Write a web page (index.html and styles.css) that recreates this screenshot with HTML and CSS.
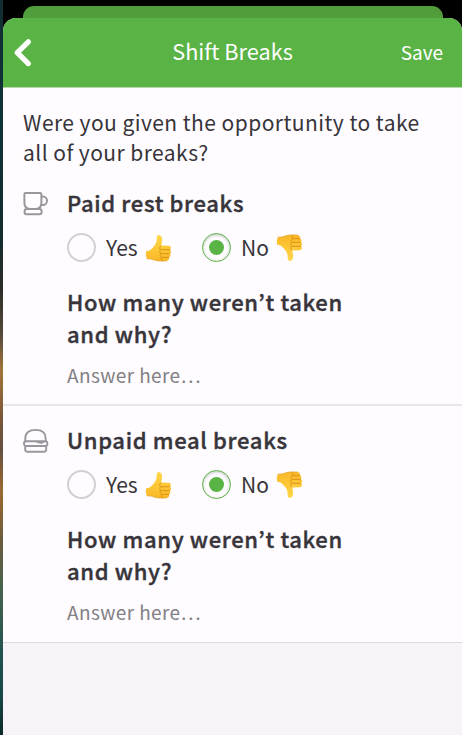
FILE: index.html
```html
<!DOCTYPE html>
<html lang="en">
<head>
    <meta charset="UTF-8">
    <meta name="viewport" content="width=device-width, initial-scale=1.0">
    <title>Shift Breaks</title>
    <link rel="stylesheet" href="styles.css">
</head>
<body>
    <!-- Shared thumb icon -->
    <svg class="defs" width="0" height="0">
        <defs>
            <linearGradient id="skin" x1="0" y1="0" x2="0" y2="1">
                <stop offset="0" stop-color="#ffd84a"/>
                <stop offset="1" stop-color="#f9b826"/>
            </linearGradient>
            <symbol id="thumb" viewBox="0 0 28 28">
                <path d="M1.2 17.3 C3.5 17.2 5.5 16.2 7.2 14.2 C9.3 11.8 11 9.9 11.4 7.6 C11.7 5.5 11.5 3.8 12.1 2.2 C12.7 .8 14.7 .7 15.9 2 C17.8 4.1 17.2 8 16.1 11.6 L23.8 11.7 C26.2 11.8 26.6 15 25 15.7 C26.6 16.6 26.4 19.1 24.8 19.7 C26 20.7 25.6 22.9 24 23.4 C24.6 24.7 23.8 26.6 22 26.8 C17.5 27.2 12.5 27.3 9.3 26 C6.9 25 4.4 24.8 1.8 24.8 C.8 22.4 .6 19.7 1.2 17.3 Z" fill="url(#skin)"/>
                <path d="M16.1 11.8 C14.4 12.5 14.1 14.6 15.6 15.6 C14.3 16.6 14.4 18.7 15.9 19.5 C14.8 20.5 15 22.5 16.6 23.2 C15.8 24.5 16.2 25.9 17.4 26.7 M15.8 15.7 L25 15.7 M16 19.6 L24.8 19.7 M16.6 23.3 L24 23.4" fill="none" stroke="#d98c16" stroke-width=".9"/>
                <path d="M1.8 24.8 C4.4 24.8 6.9 25 9.3 26 C12.5 27.3 17.5 27.2 22 26.8" fill="none" stroke="#e39a1c" stroke-width=".7"/>
            </symbol>
        </defs>
    </svg>

    <div class="back-card"></div>
    <div class="card">
        <header class="header">
            <svg class="back" viewBox="0 0 18 28" width="18" height="28"><path d="M14.3 2.8 L3.3 13.7 L14.3 24.6" fill="none" stroke="#fff" stroke-width="5.2" stroke-linecap="round" stroke-linejoin="round"/></svg>
            <h1 class="title">Shift Breaks</h1>
            <span class="save">Save</span>
        </header>

        <main class="content">
            <p class="question">Were you given the opportunity to take<br>all of your breaks?</p>

            <section class="section first">
                <svg class="icon" viewBox="0 0 26 26" width="26" height="26" fill="none" stroke="#99969d" stroke-width="2" stroke-linejoin="round">
                    <path d="M2.6 2 H17 Q18.4 2 18.4 3.4 V11.5 Q18.4 17.9 12.8 17.9 H7 Q1.4 17.9 1.4 11.5 V3.2 Q1.4 2 2.6 2 Z"/>
                    <path d="M18.6 5.5 H19.8 A4.2 4.2 0 0 1 19.8 13.9 H18.1"/>
                    <rect x="1.6" y="18" width="17" height="5.2" rx="2"/>
                </svg>
                <div class="details">
                    <h2 class="break-name">Paid rest breaks</h2>
                    <div class="options">
                        <span class="radio"></span>
                        <span class="option yes">Yes</span>
                        <svg class="thumb" width="28" height="28"><use href="#thumb"/></svg>
                        <span class="radio checked"></span>
                        <span class="option no">No</span>
                        <svg class="thumb down" width="28" height="28"><use href="#thumb"/></svg>
                    </div>
                    <h3 class="follow-up">How many weren’t taken<br>and why?</h3>
                    <div class="answer">Answer here…</div>
                </div>
            </section>

            <section class="section">
                <svg class="icon" viewBox="0 0 26 26" width="26" height="26" fill="none" stroke="#99969d" stroke-width="1.9" stroke-linejoin="round">
                    <path d="M2.3 13.2 V10.5 C2.3 4.8 6 1.9 12.7 1.9 C19.4 1.9 22.7 4.8 22.7 10.5 V13.2"/>
                    <rect x="1" y="13.2" width="23.4" height="4.8" rx="2.2"/>
                    <path d="M2.2 18.3 V21.5 Q2.2 23.7 4.4 23.7 H21 Q23.2 23.7 23.2 21.5 V18.3"/>
                    <path d="M11.5 13.5 H22.5 L18.3 15.8 Z" fill="#99969d" stroke-width=".6"/>
                </svg>
                <div class="details">
                    <h2 class="break-name">Unpaid meal breaks</h2>
                    <div class="options">
                        <span class="radio"></span>
                        <span class="option yes">Yes</span>
                        <svg class="thumb" width="28" height="28"><use href="#thumb"/></svg>
                        <span class="radio checked"></span>
                        <span class="option no">No</span>
                        <svg class="thumb down" width="28" height="28"><use href="#thumb"/></svg>
                    </div>
                    <h3 class="follow-up">How many weren’t taken<br>and why?</h3>
                    <div class="answer">Answer here…</div>
                </div>
            </section>
        </main>
    </div>
</body>
</html>
```
FILE: styles.css
```css
* {
    box-sizing: border-box;
}

body {
    margin: 0;
    height: 735px;
    overflow: hidden;
    display: flex;
    flex-direction: column;
    padding: 6px 0 0 3px;
    font-family: "Noto Sans CJK KR", "Open Sans", sans-serif;
    color: #37343a;
    /* the backdrop shows as a thin strip beside the card */
    background:
        linear-gradient(#132e32 0, #0e3339 120px, #142c2d 240px, #2d2d28 290px, #554a3c 335px, #a27438 370px, #795639 420px, #645040 450px, #9b692f 490px, #6c5b3e 540px, #47624f 590px, #235350 650px, #174846 695px, #0b2929 735px) 0 0 / 3px 100% no-repeat,
        #000;
}

h1, h2, h3, p {
    margin: 0;
    white-space: nowrap;
}

.defs {
    display: block;
    flex: none;
}

.back-card {
    height: 12px;
    flex: none;
    margin: 0 19px 0 20px;
    border-radius: 11px 11px 0 0;
    background: #519d3c;
}

.card {
    flex: 1;
    background: #f7f3f9;
    border-radius: 13px 13px 0 0;
    overflow: hidden;
}

.header {
    height: 70px;
    padding: 0 19px 0 11px;
    display: grid;
    grid-template-columns: 88px 1fr 80px;
    align-items: center;
    background: #5ab345;
    border-bottom: 1px solid #b3d9aa;
    color: #fff;
}

.title {
    padding-bottom: 4px;
    font-size: 21.7px;
    font-weight: 400;
    text-align: center;
}

.save {
    padding-bottom: 2px;
    font-size: 19px;
    text-align: right;
}

.content {
    background: #fefcff;
    padding-top: 19px;
}

.question {
    margin-left: 20px;
    font-size: 21px;
    line-height: 30px;
    letter-spacing: 0.45px;
}

.section {
    display: flex;
    padding: 18px 0 15px 20px;
    border-bottom: 1px solid #dcd9df;
}

.section.first {
    padding: 20px 0 14px 20px;
    border-bottom: 2px solid #e9e6eb;
}

.icon {
    flex: none;
    margin: 4px 18px 0 0;
}

.break-name {
    font-size: 22px;
    font-weight: 500;
    line-height: 30px;
    letter-spacing: 0.66px;
    -webkit-text-stroke: 0.4px;
}

.options {
    display: flex;
    align-items: center;
    height: 29px;
    margin: 16px 0 23px;
}

.radio {
    width: 29px;
    height: 29px;
    display: flex;
    align-items: center;
    justify-content: center;
    border: 2px solid #d3d0d5;
    border-radius: 50%;
}

.radio.checked {
    margin-left: 29px;
    border: 1px solid #5ab345;
    box-shadow: inset 0 1px 3px rgba(0, 0, 0, 0.25);
}

.radio.checked::after {
    content: "";
    width: 15px;
    height: 15px;
    border-radius: 50%;
    background: #5ab345;
}

.option {
    margin-left: 10px;
    font-size: 21px;
    line-height: 29px;
}

.yes {
    width: 39px;
}

.no {
    width: 35px;
}

.down {
    transform: scaleY(-1);
}

.follow-up {
    font-size: 22px;
    font-weight: 500;
    line-height: 32px;
    letter-spacing: 0.66px;
    -webkit-text-stroke: 0.4px;
}

.answer {
    margin-top: 11px;
    font-size: 19px;
    line-height: 30px;
    letter-spacing: 0.4px;
    color: #828085;
}
```
